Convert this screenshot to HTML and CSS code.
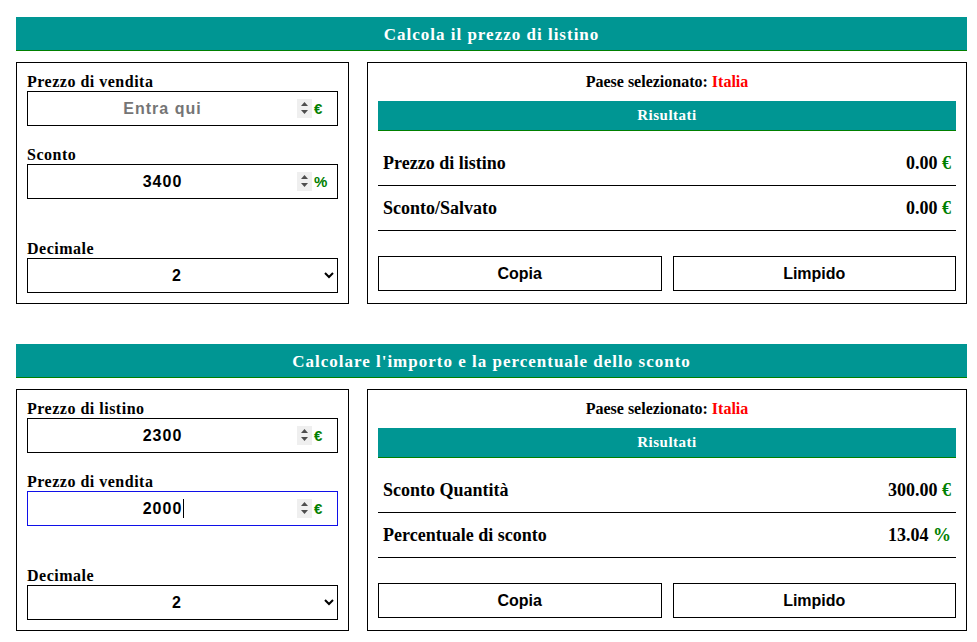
FILE: index.html
```html
<!DOCTYPE html>
<html lang="it">
<head>
<meta charset="utf-8">
<title>Calcolatore di sconto</title>
<link rel="stylesheet" href="styles.css">
</head>
<body>
<div class="page">
  <section class="calc">
    <h2 class="calc-title">Calcola il prezzo di listino</h2>
    <div class="calc-body">
      <div class="panel panel-inputs">
        <div class="field">
          <label class="field-label">Prezzo di vendita</label>
          <div class="input-group">
            <input class="num" type="number" placeholder="Entra qui">
            <span class="spin"><svg width="15" height="19" viewBox="0 0 15 19"><path d="M4 7 L7.5 3 L11 7 Z M4 11 L7.5 15 L11 11 Z" fill="#4d4d4d"/></svg></span>
            <span class="suffix">€</span>
          </div>
        </div>
        <div class="field">
          <label class="field-label">Sconto</label>
          <div class="input-group">
            <input class="num" type="number" value="3400">
            <span class="spin"><svg width="15" height="19" viewBox="0 0 15 19"><path d="M4 7 L7.5 3 L11 7 Z M4 11 L7.5 15 L11 11 Z" fill="#4d4d4d"/></svg></span>
            <span class="suffix">%</span>
          </div>
        </div>
        <div class="field field-decimal">
          <label class="field-label">Decimale</label>
          <select class="select"><option>2</option></select>
        </div>
      </div>
      <div class="panel panel-results">
        <p class="country">Paese selezionato: <span class="country-name">Italia</span></p>
        <h3 class="results-title">Risultati</h3>
        <div class="result-row first">
          <span class="result-label">Prezzo di listino</span>
          <span class="result-value">0.00 <span class="unit">€</span></span>
        </div>
        <div class="result-row">
          <span class="result-label">Sconto/Salvato</span>
          <span class="result-value">0.00 <span class="unit">€</span></span>
        </div>
        <div class="actions">
          <button class="btn">Copia</button>
          <button class="btn">Limpido</button>
        </div>
      </div>
    </div>
  </section>

  <section class="calc second">
    <h2 class="calc-title">Calcolare l'importo e la percentuale dello sconto</h2>
    <div class="calc-body">
      <div class="panel panel-inputs">
        <div class="field">
          <label class="field-label">Prezzo di listino</label>
          <div class="input-group">
            <input class="num" type="number" value="2300">
            <span class="spin"><svg width="15" height="19" viewBox="0 0 15 19"><path d="M4 7 L7.5 3 L11 7 Z M4 11 L7.5 15 L11 11 Z" fill="#4d4d4d"/></svg></span>
            <span class="suffix">€</span>
          </div>
        </div>
        <div class="field">
          <label class="field-label">Prezzo di vendita</label>
          <div class="input-group is-focused">
            <span class="num-wrap"><input class="num" type="number" value="2000"><span class="caret"></span></span>
            <span class="spin"><svg width="15" height="19" viewBox="0 0 15 19"><path d="M4 7 L7.5 3 L11 7 Z M4 11 L7.5 15 L11 11 Z" fill="#4d4d4d"/></svg></span>
            <span class="suffix">€</span>
          </div>
        </div>
        <div class="field field-decimal">
          <label class="field-label">Decimale</label>
          <select class="select"><option>2</option></select>
        </div>
      </div>
      <div class="panel panel-results">
        <p class="country">Paese selezionato: <span class="country-name">Italia</span></p>
        <h3 class="results-title">Risultati</h3>
        <div class="result-row first">
          <span class="result-label">Sconto Quantità</span>
          <span class="result-value">300.00 <span class="unit">€</span></span>
        </div>
        <div class="result-row">
          <span class="result-label">Percentuale di sconto</span>
          <span class="result-value">13.04 <span class="unit">%</span></span>
        </div>
        <div class="actions">
          <button class="btn">Copia</button>
          <button class="btn">Limpido</button>
        </div>
      </div>
    </div>
  </section>
</div>
</body>
</html>
```

FILE: styles.css
```css
html, body {
  margin: 0;
  padding: 0;
  background: #ffffff;
}

body {
  font-family: "Liberation Serif", "Times New Roman", serif;
  color: #000;
}

.page {
  padding: 17px 10px 0 16px;
}

.calc.second {
  margin-top: 40px;
}

.calc-title {
  margin: 0 0 11px;
  height: 30px;
  padding-top: 3px;
  line-height: 30px;
  background: #009693;
  border-bottom: 1px solid #008000;
  color: #ffffff;
  font-size: 17px;
  font-weight: bold;
  letter-spacing: 1px;
  text-align: center;
}

.calc-body {
  display: grid;
  grid-template-columns: 333px 1fr;
  gap: 18px;
}

.panel {
  border: 1px solid #000;
  padding: 10px;
}

/* ---- inputs panel ---- */
.field {
  display: flex;
  flex-direction: column;
}

.field + .field {
  margin-top: 20px;
}

.field.field-decimal {
  margin-top: 41px;
}

.field-label {
  font-size: 16px;
  font-weight: bold;
  line-height: 18px;
  letter-spacing: 0.5px;
}

.input-group {
  display: flex;
  align-items: center;
  height: 33px;
  border: 1px solid #000;
  background: #fff;
}

.input-group.is-focused {
  border-color: #1010e8;
}

.num {
  flex: 1;
  min-width: 0;
  height: 19px;
  margin: 0;
  padding: 0;
  border: none;
  outline: none;
  background: transparent;
  font-family: "Liberation Sans", Arial, sans-serif;
  font-size: 16px;
  font-weight: bold;
  letter-spacing: 1px;
  color: #000;
  text-align: center;
  -moz-appearance: textfield;
}

.num::placeholder {
  color: #757575;
}

.num::-webkit-inner-spin-button,
.num::-webkit-outer-spin-button {
  -webkit-appearance: none;
  margin: 0;
}

.num-wrap {
  position: relative;
  flex: 1;
  display: flex;
  min-width: 0;
}

.caret {
  position: absolute;
  left: 155px;
  top: 0;
  width: 1px;
  height: 19px;
  background: #000;
}

.spin {
  display: flex;
  width: 15px;
  height: 19px;
  background: #efefef;
}

.suffix {
  width: 25px;
  padding-left: 2px;
  box-sizing: border-box;
  color: #008000;
  font-family: "Liberation Sans", Arial, sans-serif;
  font-size: 15px;
  font-weight: bold;
}

.select {
  width: 100%;
  height: 35px;
  margin: 0;
  border: 1px solid #000;
  border-radius: 0;
  background: #fff;
  font-family: "Liberation Sans", Arial, sans-serif;
  font-size: 16px;
  font-weight: bold;
  color: #000;
  text-align: center;
  text-align-last: center;
}

/* ---- results panel ---- */
.country {
  margin: 0;
  font-size: 16px;
  font-weight: bold;
  line-height: 18px;
  text-align: center;
}

.country-name {
  color: #ff0000;
}

.results-title {
  margin: 10px 0 0;
  height: 29px;
  line-height: 29px;
  background: #009693;
  border-bottom: 1px solid #008000;
  color: #fff;
  font-size: 15px;
  font-weight: bold;
  letter-spacing: 0.5px;
  text-align: center;
}

.result-row {
  display: flex;
  justify-content: space-between;
  align-items: center;
  height: 44px;
  padding: 0 5px;
  border-bottom: 1px solid #000;
  font-size: 18px;
  font-weight: bold;
}

.result-row.first {
  margin-top: 10px;
}

.unit {
  color: #008000;
}

.actions {
  display: grid;
  grid-template-columns: 1fr 1fr;
  gap: 11px;
  margin-top: 25px;
}

.btn {
  height: 35px;
  margin: 0;
  padding: 0;
  border: 1px solid #000;
  border-radius: 0;
  background: #fff;
  font-family: "Liberation Sans", Arial, sans-serif;
  font-size: 16px;
  font-weight: bold;
  color: #000;
}
```
